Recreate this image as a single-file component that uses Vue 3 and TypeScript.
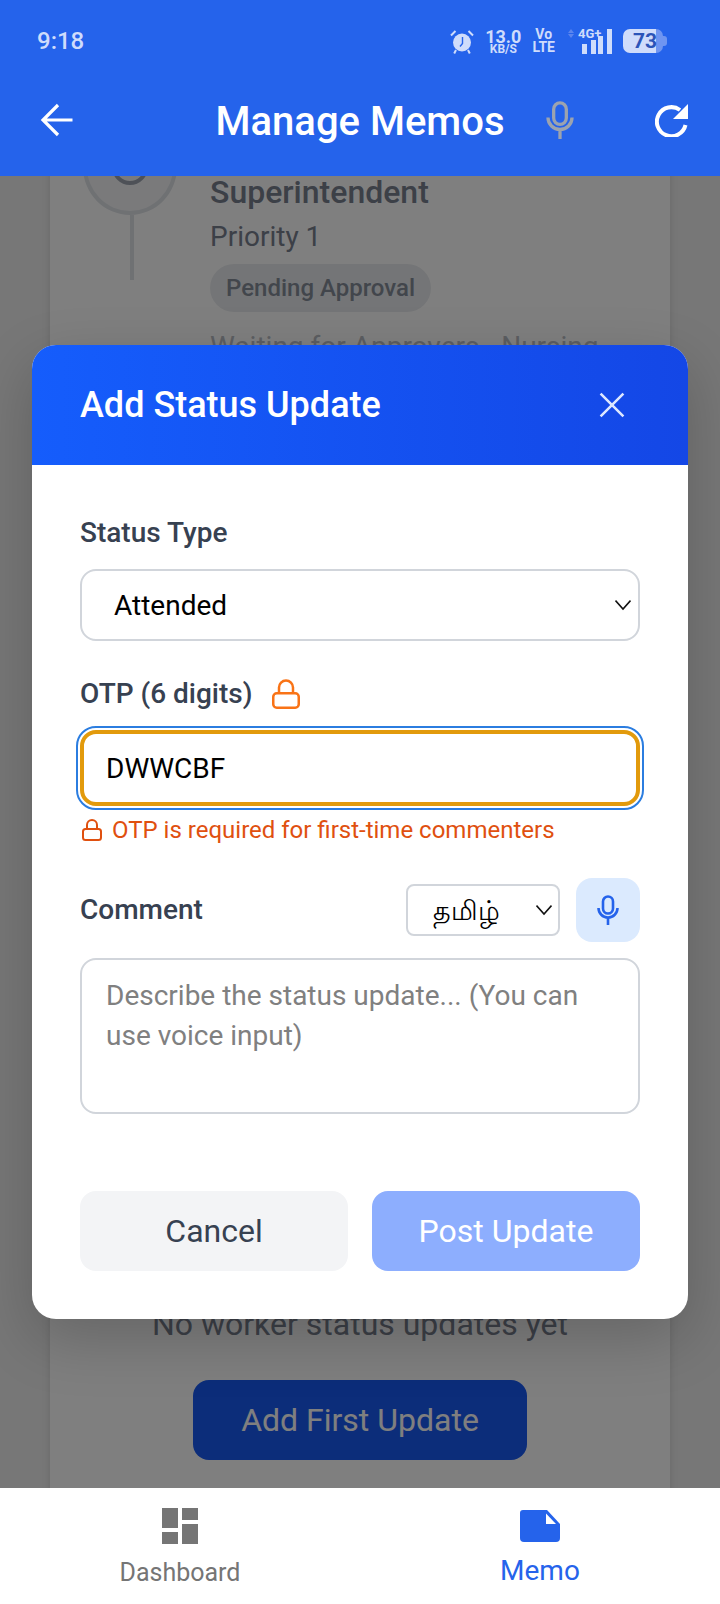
<template>
  <div class="app">
    <header class="topbar">
      <div class="status">
        <span class="time">9:18</span>
        <div class="status-icons">
          <svg viewBox="0 0 24 25" width="24" height="25">
            <circle cx="12" cy="13.5" r="9" fill="#cfdcfb" />
            <path d="M12.5 8v6.5l-2.5 3" fill="none" stroke="#2563eb" stroke-width="1.4" />
            <path d="M1 6.5 5.5 2M23 6.5 18.5 2M6 21l-1.8 3.5M18 21l1.8 3.5" fill="none" stroke="#cfdcfb" stroke-width="2" />
          </svg>
          <div class="speed"><b>13.0</b><small>KB/S</small></div>
          <div class="volte"><span>Vo</span><span>LTE</span></div>
          <div class="signal">
            <svg viewBox="0 0 44 25" width="44" height="25">
              <path d="M3 0l3 4H0zM3 9 0 5h6z" fill="#5b85ee" />
              <path d="M14 15h5v10h-5zM23 11h5v14h-5zM30 7h5v18h-5zM39 0h5v25h-5z" fill="#cfdcfb" />
            </svg>
            <span class="net">4G+</span>
          </div>
          <div class="battery">73</div>
        </div>
      </div>
      <div class="titlebar">
        <button class="icon-btn back" type="button">
          <svg viewBox="0 0 34 34" width="34" height="34" fill="none" stroke="#fff" stroke-width="3.2">
            <path d="M32.5 17H3M18 2 3 17l15 15" />
          </svg>
        </button>
        <h1>Manage Memos</h1>
        <div class="title-actions">
          <svg viewBox="0 0 22 30" width="28" height="38" fill="none" stroke="#9ca3af" stroke-width="2.6">
            <rect x="6" y="1.5" width="10" height="17" rx="5" />
            <path d="M1.5 13a9.5 9.5 0 0 0 19 0M11 23v7" />
          </svg>
          <button class="icon-btn refresh" type="button">
            <svg viewBox="0 0 34 34" width="34" height="34" fill="none" stroke="#fff" stroke-width="4">
              <path d="M30.5 22A14.5 14.5 0 1 1 25 7" />
              <path d="M33 1v15H18z" fill="#fff" stroke="none" />
            </svg>
          </button>
        </div>
      </div>
    </header>

    <main class="content">
      <div class="memo-card">
        <div class="step-row">
          <div class="timeline">
            <div class="dot"><span></span></div>
            <div class="line"></div>
          </div>
          <div class="step">
            <h3>Superintendent</h3>
            <p class="priority">Priority 1</p>
            <span class="pill">Pending Approval</span>
            <p class="waiting">Waiting for Approvers - Nursing</p>
          </div>
        </div>
        <div class="empty">
          <p>No worker status updates yet</p>
          <button type="button" class="add-first">Add First Update</button>
        </div>
      </div>

      <div class="overlay">
        <div class="modal">
          <div class="modal-head">
            <h2>Add Status Update</h2>
            <button class="close" type="button">
              <svg viewBox="0 0 24 24" width="36" height="36" fill="none" stroke="#dbe6ff" stroke-width="1.7">
                <path d="M4.4 4.4l15.2 15.2M19.6 4.4 4.4 19.6" />
              </svg>
            </button>
          </div>
          <form class="modal-body" @submit.prevent>
            <label class="label">Status Type</label>
            <div class="select-box">
              <span>{{ statusType }}</span>
              <svg viewBox="0 0 16 16" width="16" height="16" fill="none" stroke="#111" stroke-width="1.6">
                <path d="M.5 3.5 8 12l7.5-8.5" />
              </svg>
            </div>

            <div class="label otp-label">
              <span>OTP (6 digits)</span>
              <svg viewBox="0 0 28 30" width="28" height="30" fill="none" stroke="#f97316" stroke-width="2.5">
                <rect x="1.25" y="14.25" width="25.5" height="14.5" rx="3.5" />
                <path d="M7 14V8.5a7 7 0 0 1 14 0V14" />
              </svg>
            </div>
            <input class="otp-input" type="text" v-model="otp" />
            <p class="otp-hint">
              <svg viewBox="0 0 20 22" width="20" height="22" fill="none" stroke="#e0500f" stroke-width="2">
                <rect x="1" y="10" width="18" height="11" rx="2.5" />
                <path d="M5 10V6a5 5 0 0 1 10 0v4" />
              </svg>
              OTP is required for first-time commenters
            </p>

            <div class="comment-row">
              <span class="label">Comment</span>
              <div class="comment-tools">
                <div class="lang">
                  <span>தமிழ்</span>
                  <svg viewBox="0 0 16 16" width="16" height="16" fill="none" stroke="#111" stroke-width="1.6">
                    <path d="M.5 3.5 8 12l7.5-8.5" />
                  </svg>
                </div>
                <button class="mic" type="button">
                  <svg viewBox="0 0 22 30" width="22" height="30" fill="none" stroke="#2563eb" stroke-width="2.6">
                    <rect x="6" y="1.5" width="10" height="17" rx="5" />
                    <path d="M1.5 13a9.5 9.5 0 0 0 19 0M11 23v7" />
                  </svg>
                </button>
              </div>
            </div>
            <textarea class="comment" placeholder="Describe the status update... (You can use voice input)"></textarea>

            <div class="actions">
              <button class="cancel" type="button">Cancel</button>
              <button class="post" type="submit">Post Update</button>
            </div>
          </form>
        </div>
      </div>
    </main>

    <nav class="bottom-nav">
      <a class="tab" v-for="tab in tabs" :key="tab.label" :class="{ active: tab.active }">
        <svg v-if="!tab.active" viewBox="0 0 36 36" width="36" height="36" fill="#757575">
          <path d="M0 0h16v20H0zM20 0h16v12H20zM20 16h16v20H20zM0 24h16v12H0z" />
        </svg>
        <svg v-else viewBox="0 0 40 32" width="40" height="32" fill="#2563eb">
          <path d="M3 0h24l13 14v14a4 4 0 0 1-4 4H4a4 4 0 0 1-4-4V3a3 3 0 0 1 3-3z" />
          <path d="M26 3.5V14h10z" fill="#fff" />
        </svg>
        <span>{{ tab.label }}</span>
      </a>
    </nav>
  </div>
</template>

<script setup lang="ts">
import { ref } from 'vue';

interface Tab {
  label: string;
  active: boolean;
}

const tabs: Tab[] = [
  { label: 'Dashboard', active: false },
  { label: 'Memo', active: true }
];

const statusType = ref<string>('Attended');
const otp = ref<string>('DWWCBF');
</script>

<style>
html, body {
  margin: 0;
  background: #fff;
}
</style>

<style scoped>
* {
  box-sizing: border-box;
}

.app {
  width: 720px;
  height: 1604px;
  display: flex;
  flex-direction: column;
  font-family: Roboto, "Noto Sans", sans-serif;
  overflow: hidden;
}

.topbar {
  height: 176px;
  background: #2563eb;
  color: #fff;
  flex: none;
  position: relative;
  z-index: 2;
}

.status {
  height: 82px;
  display: flex;
  justify-content: space-between;
  align-items: center;
  padding: 0 53px 0 37px;
  color: #cfdcfb;
}

.time {
  font-size: 24px;
  font-weight: 500;
}

.status-icons {
  display: flex;
  align-items: center;
  gap: 11px;
}

.speed, .volte {
  display: flex;
  flex-direction: column;
  align-items: center;
  font-weight: 700;
}

.speed b {
  font-size: 18px;
  font-weight: 700;
  line-height: 15px;
}

.speed small {
  font-size: 12px;
  font-weight: 700;
  line-height: 10px;
}

.volte {
  font-size: 14px;
  line-height: 13px;
  font-weight: 700;
}

.signal {
  position: relative;
  margin-left: 2px;
  display: flex;
}

.net {
  position: absolute;
  left: 10px;
  top: -2px;
  font-size: 13px;
  line-height: 14px;
  font-weight: 700;
}

.battery {
  position: relative;
  width: 40px;
  height: 24px;
  margin-right: 4px;
  border-radius: 7px;
  background: linear-gradient(90deg, #cfdcfb 33px, #6f95f1 33px);
  color: #2b54b8;
  font-size: 21px;
  font-weight: 700;
  line-height: 24px;
  padding-left: 10px;
}

.battery::after {
  content: "";
  position: absolute;
  right: -4px;
  top: 7px;
  width: 4px;
  height: 10px;
  border-radius: 0 3px 3px 0;
  background: #6f95f1;
}

.titlebar {
  height: 76px;
  display: grid;
  grid-template-columns: 1fr auto 1fr;
  align-items: center;
  padding: 0 31px;
}

.titlebar h1 {
  margin: 0;
  font-size: 40px;
  font-weight: 500;
  line-height: 48px;
  padding-top: 4px;
}

.title-actions {
  display: flex;
  align-items: center;
  padding-left: 42px;
}

.icon-btn {
  background: none;
  border: none;
  padding: 0;
  display: flex;
}

.back {
  margin-left: 9px;
}

.refresh {
  margin-left: auto;
}

.content {
  flex: 1;
  position: relative;
  background: #eee;
  overflow: hidden;
}

.memo-card {
  margin: -57px 50px 0;
  height: 1400px;
  background: #fff;
  box-shadow: 0 0 8px rgba(0, 0, 0, 0.12);
}

.step-row {
  display: flex;
  gap: 33px;
  padding-left: 33px;
}

.dot {
  width: 94px;
  height: 96px;
  border: 4px solid #dfe2e7;
  border-radius: 50%;
  background: #f4f5f7;
  display: flex;
  align-items: center;
  justify-content: center;
}

.dot span {
  width: 36px;
  height: 36px;
  border: 4px solid #9ca3af;
  border-radius: 50%;
}

.line {
  width: 4px;
  height: 65px;
  margin-left: 47px;
  background: #dfe2e7;
}

.step {
  padding-top: 53px;
  color: #78808f;
}

.step h3 {
  margin: 0;
  font-size: 32px;
  font-weight: 500;
  line-height: 40px;
}

.priority {
  margin: 5px 0 0;
  font-size: 28px;
  line-height: 40px;
}

.pill {
  display: block;
  width: fit-content;
  margin-top: 7px;
  padding: 0 16px;
  height: 48px;
  line-height: 48px;
  border-radius: 24px;
  background: #e9ebee;
  font-size: 24px;
  font-weight: 500;
  color: #858c99;
}

.waiting {
  margin: 15px 0 0;
  font-size: 28px;
  line-height: 40px;
  color: #b9bdc5;
  white-space: nowrap;
}

.empty {
  margin-top: 937px;
  display: flex;
  flex-direction: column;
  align-items: center;
}

.empty p {
  margin: 0;
  font-size: 32px;
  color: #78808f;
  line-height: 40px;
}

.add-first {
  margin-top: 36px;
  width: 334px;
  height: 80px;
  border: none;
  border-radius: 16px;
  background: #185af5;
  color: #fff;
  font: 400 32px Roboto, sans-serif;
}

.overlay {
  position: absolute;
  inset: 0;
  background: rgba(0, 0, 0, 0.5);
  display: flex;
  align-items: center;
  justify-content: center;
}

.modal {
  width: 656px;
  background: #fff;
  border-radius: 24px;
  overflow: hidden;
  box-shadow: 0 20px 60px rgba(0, 0, 0, 0.2);
}

.modal-head {
  height: 120px;
  background: linear-gradient(90deg, #155dfc, #1447e6);
  display: flex;
  align-items: center;
  justify-content: space-between;
  padding: 0 58px 0 48px;
  color: #fff;
}

.modal-head h2 {
  margin: 0;
  font-size: 36px;
  font-weight: 500;
}

.close {
  background: none;
  border: none;
  padding: 0;
  display: flex;
}

.modal-body {
  padding: 48px;
  display: flex;
  flex-direction: column;
}

.label {
  display: block;
  font-size: 28px;
  font-weight: 500;
  color: #374151;
  line-height: 40px;
}

.select-box {
  margin-top: 16px;
  height: 72px;
  border: 2px solid #d1d5db;
  border-radius: 16px;
  display: flex;
  align-items: center;
  justify-content: space-between;
  padding: 0 7px 0 32px;
  font-size: 28px;
  color: #000;
}

.otp-label {
  margin-top: 33px;
  display: flex;
  align-items: center;
  gap: 19px;
}

.otp-input {
  margin-top: 16px;
  width: 100%;
  height: 76px;
  border: 4px solid #e29a0c;
  border-radius: 16px;
  outline: 2px solid #2b7de0;
  outline-offset: 2px;
  padding: 0 22px;
  font: 400 28px Roboto, sans-serif;
  color: #000;
}

.otp-hint {
  margin: 8px 0 0;
  padding-left: 2px;
  display: flex;
  align-items: center;
  gap: 10px;
  font-size: 24px;
  color: #e0500f;
  line-height: 32px;
}

.comment-row {
  margin-top: 32px;
  display: flex;
  align-items: center;
  justify-content: space-between;
}

.comment-tools {
  display: flex;
  align-items: center;
  gap: 16px;
}

.lang {
  width: 154px;
  height: 52px;
  border: 2px solid #d1d5db;
  border-radius: 8px;
  display: flex;
  align-items: center;
  justify-content: space-between;
  padding: 0 6px 0 25px;
  font-family: "Noto Sans", sans-serif;
  font-size: 27px;
  color: #000;
}

.mic {
  width: 64px;
  height: 64px;
  border: none;
  border-radius: 16px;
  background: #dbeafe;
  display: flex;
  align-items: center;
  justify-content: center;
}

.comment {
  display: block;
  margin-top: 16px;
  height: 156px;
  border: 2px solid #d1d5db;
  border-radius: 16px;
  padding: 16px 24px 14px;
  font: 400 28px/40px Roboto, sans-serif;
  resize: none;
  outline: none;
}

.comment::placeholder {
  color: #808080;
}

.actions {
  margin-top: 77px;
  display: grid;
  grid-template-columns: 1fr 1fr;
  gap: 24px;
}

.actions button {
  height: 80px;
  border: none;
  border-radius: 16px;
  font: 400 32px Roboto, sans-serif;
}

.cancel {
  background: #f3f4f6;
  color: #374151;
}

.post {
  background: #8daefe;
  color: #fff;
}

.bottom-nav {
  height: 116px;
  flex: none;
  background: #fff;
  display: grid;
  grid-template-columns: 1fr 1fr;
  position: relative;
  z-index: 2;
}

.tab {
  display: flex;
  flex-direction: column;
  align-items: center;
  padding-top: 20px;
  gap: 14px;
  font-size: 25px;
  line-height: 29px;
  color: #757575;
}

.tab.active {
  padding-top: 22px;
  color: #2563eb;
  font-size: 28px;
  line-height: 33px;
  gap: 12px;
}
</style>
